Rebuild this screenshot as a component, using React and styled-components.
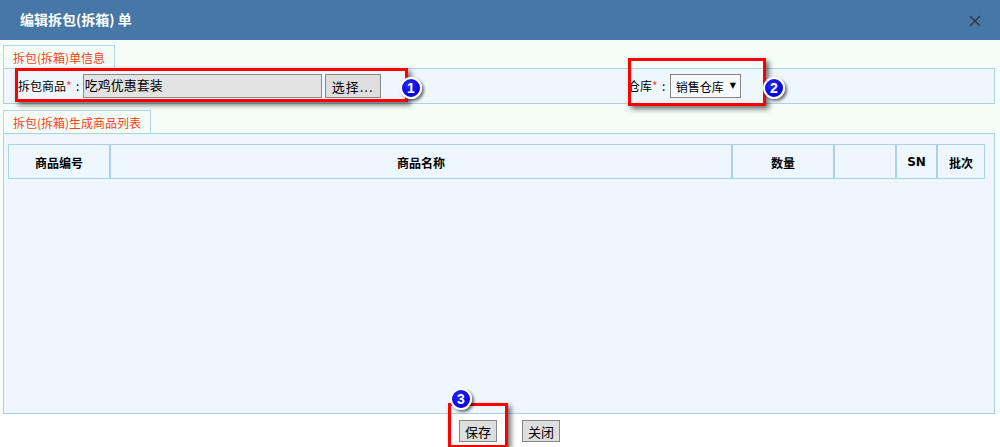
import React from "react";
import styled, { createGlobalStyle } from "styled-components";

const Global = createGlobalStyle`
  html, body { margin: 0; padding: 0; background: #ffffff; }
  body { font-family: "Noto Sans CJK SC", "Noto Sans", sans-serif; font-size: 12px; color: #000; }
  * { box-sizing: border-box; }
`;

const Dialog = styled.div`
  width: 1000px;
  height: 447px;
  display: flex;
  flex-direction: column;
  overflow: hidden;
  background: #ffffff;
`;

const Header = styled.div`
  height: 40px;
  flex: none;
  background: #4677a7;
  display: flex;
  align-items: center;
  justify-content: space-between;
  padding: 0 19px 0 20px;
`;

const Title = styled.div`
  color: #ffffff;
  font-size: 14px;
  font-weight: 700;
  line-height: 16px;
  margin-top: -3px;
`;

const CloseBtn = styled.div`
  width: 12px;
  height: 12px;
  display: flex;
  margin-top: 1px;
`;

const Body = styled.div`
  height: 374px;
  flex: none;
  background: #f4fdf8;
  padding: 5px 5px 0 3px;
  display: flex;
  flex-direction: column;
`;

const Tab = styled.div`
  align-self: flex-start;
  width: ${(p) => p.$w}px;
  height: 23px;
  margin-top: ${(p) => p.$mt || 0}px;
  border: 1px solid #b1d9df;
  border-bottom: none;
  background: #f4fdf8;
  color: #ff3f14;
  font-size: 12px;
  line-height: 12px;
  padding: 6px 0 0 9px;
  white-space: nowrap;
`;

const Panel = styled.div`
  position: relative;
  border: 1px solid #a9d3e4;
  background: #eef7fe;
  height: ${(p) => p.$h}px;
  flex: none;
`;

const InfoRow = styled.div`
  display: grid;
  grid-template-columns: 610px 1fr;
  align-items: center;
  height: 100%;
  padding-left: 14px;
`;

const Field = styled.div`
  display: flex;
  align-items: center;
  white-space: nowrap;
`;

const Label = styled.span`
  font-size: 12px;
  line-height: 14px;
  color: #000;
`;

const Star = styled.span`
  color: #ff3b3b;
`;

const Colon = styled.span`
  display: inline-block;
  width: 12px;
  text-align: center;
`;

const TextInput = styled.div`
  width: 239px;
  height: 24px;
  margin-left: -1px;
  border: 1px solid #8a8a8a;
  background: #e3e3e3;
  font-size: 13px;
  line-height: 20px;
  padding-left: 1px;
`;

const SmallButton = styled.div`
  width: ${(p) => p.$w}px;
  height: ${(p) => p.$h}px;
  margin-left: ${(p) => p.$ml || 0}px;
  border: 1px solid #868686;
  background: #dedede;
  font-size: 13px;
  display: flex;
  align-items: center;
  justify-content: center;
  letter-spacing: ${(p) => p.$ls || 0}px;
`;

const Select = styled.div`
  width: 71px;
  height: 24px;
  border: 1px solid #868686;
  background: #f7fbff;
  font-size: 12px;
  display: flex;
  align-items: center;
  padding-left: 5px;
  gap: 6px;
`;

const Arrow = styled.span`
  font-family: "DejaVu Sans", sans-serif;
  font-size: 8px;
  line-height: 1;
`;

const Table = styled.div`
  margin: 10px 0 0 4px;
  width: 977px;
  display: grid;
  grid-template-columns: 102px 622px 102px 62px 41px 48px;
  height: 35px;
`;

const Th = styled.div`
  border: 1px solid #a9d3e4;
  display: flex;
  align-items: center;
  justify-content: center;
  font-weight: 700;
  font-size: 12px;
  padding-top: 1px;
  font-family: ${(p) => (p.$latin ? '"DejaVu Sans", sans-serif' : '"Noto Sans CJK SC", sans-serif')};
`;

const Footer = styled.div`
  position: relative;
  flex: 1;
  display: flex;
  justify-content: center;
  gap: 25px;
  padding: 6px 0 0 19px;
  background: #ffffff;
`;

const Highlight = styled.div`
  position: absolute;
  left: ${(p) => p.$x}px;
  top: ${(p) => p.$y}px;
  width: ${(p) => p.$w}px;
  height: ${(p) => p.$h}px;
  border: 3px solid #ff0000;
  box-shadow: 3px 3px 5px rgba(0, 0, 0, 0.55);
  pointer-events: none;
`;

const Badge = styled.div`
  position: absolute;
  left: ${(p) => p.$x}px;
  top: ${(p) => p.$y}px;
  width: 22px;
  height: 22px;
  border-radius: 50%;
  border: 2px solid #ffffff;
  background: radial-gradient(circle at 40% 35%, #2a2aff, #0000d8 70%);
  box-shadow: 2px 2px 3px rgba(0, 0, 0, 0.55);
  color: #ffffff;
  font-family: "Liberation Sans", Arial, sans-serif;
  font-weight: 700;
  font-size: 14px;
  display: flex;
  align-items: center;
  justify-content: center;
  line-height: 1;
`;

export default function App() {
  return (
    <>
      <Global />
      <Dialog>
        <Header>
          <Title>编辑拆包(拆箱) 单</Title>
          <CloseBtn>
            <svg width="12" height="12" viewBox="0 0 12 12">
              <path d="M1 1 L11 11 M11 1 L1 11" stroke="#2f3a46" strokeWidth="1.5" fill="none" />
            </svg>
          </CloseBtn>
        </Header>
        <Body>
          <Tab $w={112}>拆包(拆箱)单信息</Tab>
          <Panel $h={36}>
            <InfoRow>
              <Field>
                <Label>
                  拆包商品<Star>*</Star>
                  <Colon>:</Colon>
                </Label>
                <TextInput>吃鸡优惠套装</TextInput>
                <SmallButton $w={56} $h={24} $ml={3} $ls={1}>
                  选择...
                </SmallButton>
              </Field>
              <Field>
                <Label>
                  仓库<Star>*</Star>
                  <Colon>:</Colon>
                </Label>
                <Select>
                  销售仓库 <Arrow>▼</Arrow>
                </Select>
              </Field>
            </InfoRow>
            <Highlight $x={11} $y={-1} $w={393} $h={34} />
            <Badge $x={396} $y={8}>1</Badge>
            <Highlight $x={624} $y={-11} $w={138} $h={48} />
            <Badge $x={759} $y={8}>2</Badge>
          </Panel>
          <Tab $w={148} $mt={6}>拆包(拆箱)生成商品列表</Tab>
          <Panel $h={281}>
            <Table>
              <Th>商品编号</Th>
              <Th>商品名称</Th>
              <Th>数量</Th>
              <Th></Th>
              <Th $latin>SN</Th>
              <Th>批次</Th>
            </Table>
          </Panel>
        </Body>
        <Footer>
          <SmallButton $w={38} $h={22}>保存</SmallButton>
          <SmallButton $w={38} $h={22}>关闭</SmallButton>
          <Highlight $x={448} $y={-11} $w={60} $h={45} />
          <Badge $x={450} $y={-26}>3</Badge>
        </Footer>
      </Dialog>
    </>
  );
}
